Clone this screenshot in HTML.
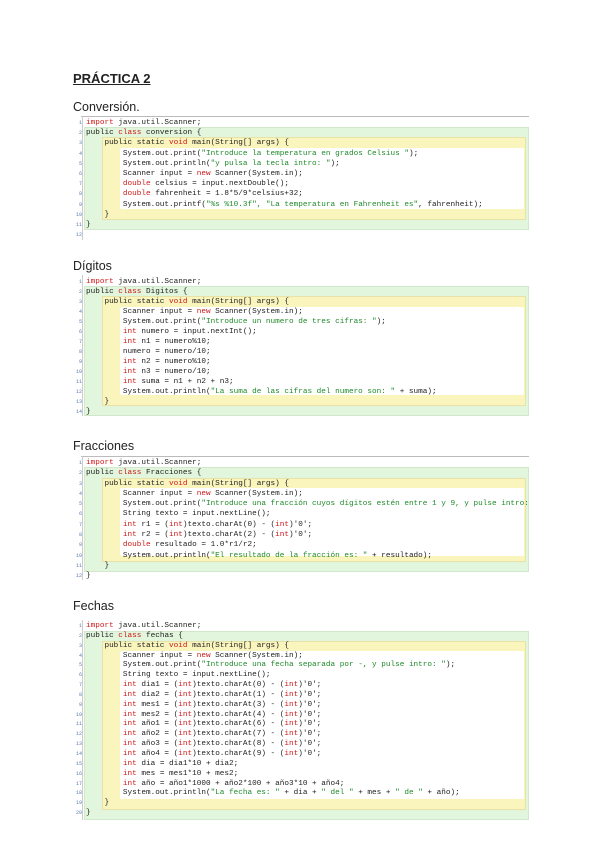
<!DOCTYPE html>
<html><head><meta charset="utf-8"><style>
body{margin:0;width:600px;height:848px;background:#fff;position:relative;overflow:hidden;font-family:"Liberation Sans",sans-serif;color:#222}
.h{position:absolute;left:73px;font-size:12.5px;line-height:14px}
.t{position:absolute;left:73px;top:71px;font-size:13px;font-weight:bold;text-decoration:underline}
.blk{position:absolute;left:73px;width:456px}
.g,.y,.w{position:absolute;right:0}
.g{left:11px;background:#e1f6dc;border:1px solid #d2e8cc}
.y{left:29px;right:3px;background:#faf5bd;border:1px solid #e8e2a8}
.w{left:47px;right:5px;background:#fff;border-radius:2px}
.top{position:absolute;left:8px;right:0;top:0;height:1px;background:#bbb}
.lft{position:absolute;left:9px;width:1px;top:0;bottom:0;background:#ccc}
.code{position:absolute;left:0;top:2px;font-family:"Liberation Mono",monospace;font-size:7.7px;white-space:normal;color:#222}
.code div{position:relative;padding-left:13px;white-space:pre;overflow:visible}
.code b{position:absolute;left:0;width:9px;text-align:right;font-weight:normal;color:#5a7ab0;font-size:5px}
.k{color:#d01818}.s{color:#1f8a2a}
</style></head><body>
<div class="t">PRÁCTICA 2</div>

<div class="h" style="top:100px">Conversión.</div>
<div class="blk" style="top:116px;height:124px">
<div class="top"></div><div class="lft"></div>
<div class="g" style="top:11px;height:101px"></div>
<div class="y" style="top:21px;height:81px"></div>
<div class="w" style="top:32px;height:61px"></div>
<div class="code" style="line-height:10.2px">
<div><b>1</b><span class="k">import</span> java.util.Scanner;</div>
<div><b>2</b>public <span class="k">class</span> conversion {</div>
<div><b>3</b>    public static <span class="k">void</span> main(String[] args) {</div>
<div><b>4</b>        System.out.print(<span class="s">"Introduce la temperatura en grados Celsius "</span>);</div>
<div><b>5</b>        System.out.println(<span class="s">"y pulsa la tecla intro: "</span>);</div>
<div><b>6</b>        Scanner input = <span class="k">new</span> Scanner(System.in);</div>
<div><b>7</b>        <span class="k">double</span> celsius = input.nextDouble();</div>
<div><b>8</b>        <span class="k">double</span> fahrenheit = 1.8*5/9*celsius+32;</div>
<div><b>9</b>        System.out.printf(<span class="s">"%s %10.3f", "La temperatura en Fahrenheit es"</span>, fahrenheit);</div>
<div><b>10</b>    }</div>
<div><b>11</b>}</div>
<div><b>12</b> </div>
</div></div>

<div class="h" style="top:259px">Dígitos</div>
<div class="blk" style="top:275px;height:141px">
<div class="lft"></div>
<div class="g" style="top:11px;height:128px"></div>
<div class="y" style="top:21px;height:108px"></div>
<div class="w" style="top:32px;height:88px"></div>
<div class="code" style="line-height:10px">
<div><b>1</b><span class="k">import</span> java.util.Scanner;</div>
<div><b>2</b>public <span class="k">class</span> Digitos {</div>
<div><b>3</b>    public static <span class="k">void</span> main(String[] args) {</div>
<div><b>4</b>        Scanner input = <span class="k">new</span> Scanner(System.in);</div>
<div><b>5</b>        System.out.print(<span class="s">"Introduce un numero de tres cifras: "</span>);</div>
<div><b>6</b>        <span class="k">int</span> numero = input.nextInt();</div>
<div><b>7</b>        <span class="k">int</span> n1 = numero%10;</div>
<div><b>8</b>        numero = numero/10;</div>
<div><b>9</b>        <span class="k">int</span> n2 = numero%10;</div>
<div><b>10</b>        <span class="k">int</span> n3 = numero/10;</div>
<div><b>11</b>        <span class="k">int</span> suma = n1 + n2 + n3;</div>
<div><b>12</b>        System.out.println(<span class="s">"La suma de las cifras del numero son: "</span> + suma);</div>
<div><b>13</b>    }</div>
<div><b>14</b>}</div>
</div></div>

<div class="h" style="top:439px">Fracciones</div>
<div class="blk" style="top:456px;height:124px">
<div class="top"></div><div class="lft"></div>
<div class="g" style="top:11px;height:103px"></div>
<div class="y" style="top:22px;height:82px"></div>
<div class="w" style="top:32px;height:68px"></div>
<div class="code" style="line-height:10.3px">
<div><b>1</b><span class="k">import</span> java.util.Scanner;</div>
<div><b>2</b>public <span class="k">class</span> Fracciones {</div>
<div><b>3</b>    public static <span class="k">void</span> main(String[] args) {</div>
<div><b>4</b>        Scanner input = <span class="k">new</span> Scanner(System.in);</div>
<div><b>5</b>        System.out.print(<span class="s">"Introduce una fracción cuyos dígitos estén entre 1 y 9, y pulse intro:</span></div>
<div><b>6</b>        String texto = input.nextLine();</div>
<div><b>7</b>        <span class="k">int</span> r1 = (<span class="k">int</span>)texto.charAt(0) - (<span class="k">int</span>)'0';</div>
<div><b>8</b>        <span class="k">int</span> r2 = (<span class="k">int</span>)texto.charAt(2) - (<span class="k">int</span>)'0';</div>
<div><b>9</b>        <span class="k">double</span> resultado = 1.0*r1/r2;</div>
<div><b>10</b>        System.out.println(<span class="s">"El resultado de la fracción es: "</span> + resultado);</div>
<div><b>11</b>    }</div>
<div><b>12</b>}</div>
</div></div>

<div class="h" style="top:599px">Fechas</div>
<div class="blk" style="top:620px;height:200px">
<div class="lft"></div>
<div class="g" style="top:11px;height:187px"></div>
<div class="y" style="top:21px;height:167px"></div>
<div class="w" style="top:31px;height:148px"></div>
<div class="code" style="line-height:9.85px">
<div><b>1</b><span class="k">import</span> java.util.Scanner;</div>
<div><b>2</b>public <span class="k">class</span> fechas {</div>
<div><b>3</b>    public static <span class="k">void</span> main(String[] args) {</div>
<div><b>4</b>        Scanner input = <span class="k">new</span> Scanner(System.in);</div>
<div><b>5</b>        System.out.print(<span class="s">"Introduce una fecha separada por -, y pulse intro: "</span>);</div>
<div><b>6</b>        String texto = input.nextLine();</div>
<div><b>7</b>        <span class="k">int</span> dia1 = (<span class="k">int</span>)texto.charAt(0) - (<span class="k">int</span>)'0';</div>
<div><b>8</b>        <span class="k">int</span> dia2 = (<span class="k">int</span>)texto.charAt(1) - (<span class="k">int</span>)'0';</div>
<div><b>9</b>        <span class="k">int</span> mes1 = (<span class="k">int</span>)texto.charAt(3) - (<span class="k">int</span>)'0';</div>
<div><b>10</b>        <span class="k">int</span> mes2 = (<span class="k">int</span>)texto.charAt(4) - (<span class="k">int</span>)'0';</div>
<div><b>11</b>        <span class="k">int</span> año1 = (<span class="k">int</span>)texto.charAt(6) - (<span class="k">int</span>)'0';</div>
<div><b>12</b>        <span class="k">int</span> año2 = (<span class="k">int</span>)texto.charAt(7) - (<span class="k">int</span>)'0';</div>
<div><b>13</b>        <span class="k">int</span> año3 = (<span class="k">int</span>)texto.charAt(8) - (<span class="k">int</span>)'0';</div>
<div><b>14</b>        <span class="k">int</span> año4 = (<span class="k">int</span>)texto.charAt(9) - (<span class="k">int</span>)'0';</div>
<div><b>15</b>        <span class="k">int</span> dia = dia1*10 + dia2;</div>
<div><b>16</b>        <span class="k">int</span> mes = mes1*10 + mes2;</div>
<div><b>17</b>        <span class="k">int</span> año = año1*1000 + año2*100 + año3*10 + año4;</div>
<div><b>18</b>        System.out.println(<span class="s">"La fecha es: "</span> + dia + <span class="s">" del "</span> + mes + <span class="s">" de "</span> + año);</div>
<div><b>19</b>    }</div>
<div><b>20</b>}</div>
</div></div>
</body></html>
